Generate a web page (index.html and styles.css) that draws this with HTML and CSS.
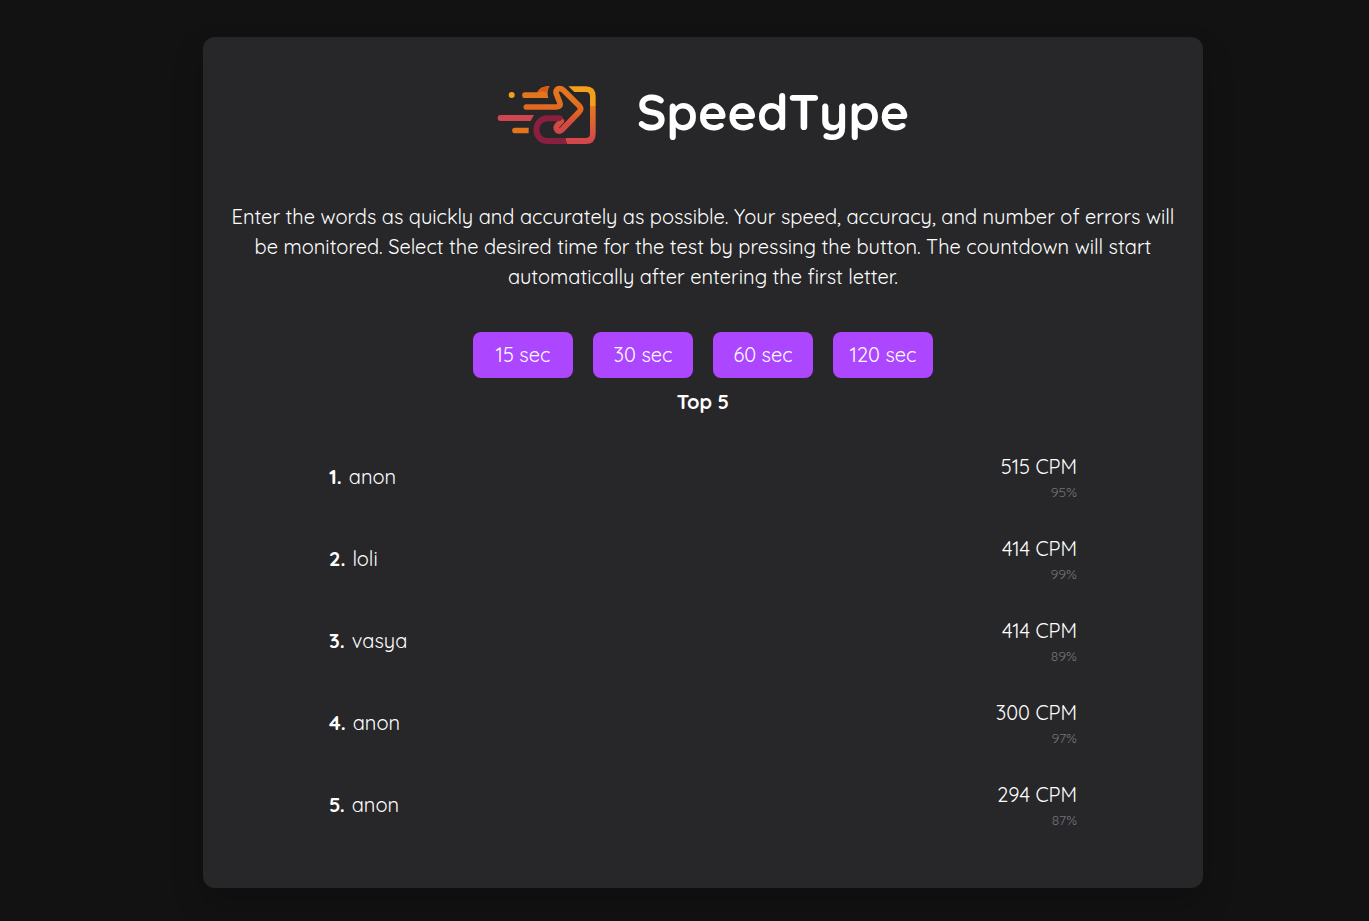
FILE: index.html
```html
<!DOCTYPE html>
<html lang="en">
<head>
<meta charset="utf-8">
<meta name="viewport" content="width=device-width, initial-scale=1">
<title>SpeedType</title>
<link rel="stylesheet" href="styles.css">
</head>
<body>
<main class="card">
  <header class="brand">
    <svg class="logo" viewBox="22 30 300 180" aria-hidden="true" fill="none" stroke-width="17" stroke-linecap="round" stroke-linejoin="round">
      <defs>
        <linearGradient id="arrow" gradientUnits="userSpaceOnUse" x1="225" y1="35" x2="215" y2="175">
          <stop offset="0.2" stop-color="#e2751d"/>
          <stop offset="0.5" stop-color="#e2681f"/>
          <stop offset="0.75" stop-color="#d84b3c"/>
          <stop offset="1" stop-color="#cf4550"/>
        </linearGradient>
        <linearGradient id="side" gradientUnits="userSpaceOnUse" x1="0" y1="93" x2="0" y2="200">
          <stop offset="0" stop-color="#e67a1c"/>
          <stop offset="1" stop-color="#d2464c"/>
        </linearGradient>
      </defs>
      <circle cx="66" cy="60" r="9" fill="#f2a01c"/>
      <path d="M106 52H143C149 40 161 33 180 34C173 43 172 56 176 69H106A8.5 8.5 0 0 1 106 52Z" fill="#e2751d"/>
      <path d="M143 52C149 40 161 33 180 34C174 42 172 50 173 54C163 48 153 48 143 52Z" fill="#d95a17"/>
      <path d="M33 120H133L123 138H33A9 9 0 0 1 33 120Z" fill="#cf4550"/>
      <path d="M76 158H117V175H76A8.5 8.5 0 0 1 76 158Z" fill="#e2751d"/>
      <path d="M236 34H288Q318 34 318 64V93H301V64Q301 51 288 51H254Z" fill="#f2a01c"/>
      <path d="M301 93H318V177Q318 207 288 207H232L226 189H288Q301 189 301 176Z" fill="url(#side)"/>
      <path d="M110 96H201Q215 96 210 82L200 56C195 40 213 36 223 47L269 93Q277 101 269 110L217 164C206 175 194 162 203 151L215 138" stroke="url(#arrow)"/>
      <path d="M229 198H174C129 198 129 130 174 130H206" stroke="#89203f" stroke-width="18" stroke-linecap="butt"/>
      <path d="M204 121Q220 120 219 130Q217 140 200 139Z" fill="#89203f"/>
    </svg>
    <h1 class="title">SpeedType</h1>
  </header>
  <p class="intro">Enter the words as quickly and accurately as possible. Your speed, accuracy, and number of errors will be monitored. Select the desired time for the test by pressing the button. The countdown will start automatically after entering the first letter.</p>
  <div class="times">
    <button class="time" type="button">15 sec</button>
    <button class="time" type="button">30 sec</button>
    <button class="time" type="button">60 sec</button>
    <button class="time" type="button">120 sec</button>
  </div>
  <h2 class="subtitle">Top 5</h2>
  <ol class="scores">
    <li class="score"><span class="player"><b>1.</b><span>anon</span></span><span class="result"><span>515 CPM</span><small class="accuracy">95%</small></span></li>
    <li class="score"><span class="player"><b>2.</b><span>loli</span></span><span class="result"><span>414 CPM</span><small class="accuracy">99%</small></span></li>
    <li class="score"><span class="player"><b>3.</b><span>vasya</span></span><span class="result"><span>414 CPM</span><small class="accuracy">89%</small></span></li>
    <li class="score"><span class="player"><b>4.</b><span>anon</span></span><span class="result"><span>300 CPM</span><small class="accuracy">97%</small></span></li>
    <li class="score"><span class="player"><b>5.</b><span>anon</span></span><span class="result"><span>294 CPM</span><small class="accuracy">87%</small></span></li>
  </ol>
</main>
</body>
</html>
```
FILE: styles.css
```css
* {
  box-sizing: border-box;
}

body {
  margin: 0;
  padding: 37px 0 33px 37px;
  background: #121212;
  color: #fff;
  font-family: Quicksand, Lato, sans-serif;
  font-size: 20px;
  line-height: 30px;
}

.card {
  max-width: 1000px;
  margin: 0 auto;
  padding: 40px 24px 42px;
  border-radius: 12px;
  background: #272729;
  box-shadow: 0 16px 32px rgba(0, 0, 0, 0.2);
}

.brand {
  display: flex;
  align-items: center;
  justify-content: center;
  gap: 40px;
}

.logo {
  width: 100px;
  height: 60px;
}

.title {
  margin: 0;
  padding-bottom: 6px;
  font-size: 50px;
  font-weight: 700;
  line-height: 70px;
}

.intro {
  margin: 49px 0 40px;
  text-align: center;
}

.times {
  display: flex;
  flex-wrap: wrap;
  justify-content: center;
  gap: 20px;
}

.time {
  width: 100px;
  padding: 8px 0;
  border: 0;
  border-radius: 8px;
  background: #ad46ff;
  color: #fff;
  font: inherit;
  cursor: pointer;
}

.subtitle {
  margin: 9px 0 19px;
  font-size: 20px;
  font-weight: 700;
  text-align: center;
}

.scores {
  max-width: 748px;
  margin: 0 auto;
  padding: 0;
  list-style: none;
}

.score {
  display: flex;
  align-items: center;
  justify-content: space-between;
  padding: 16px 0;
}

.player {
  display: flex;
  gap: 7px;
}

.result {
  display: flex;
  flex-direction: column;
  align-items: flex-end;
}

.accuracy {
  color: #71717b;
  font-size: 14px;
  line-height: 20px;
}
```
